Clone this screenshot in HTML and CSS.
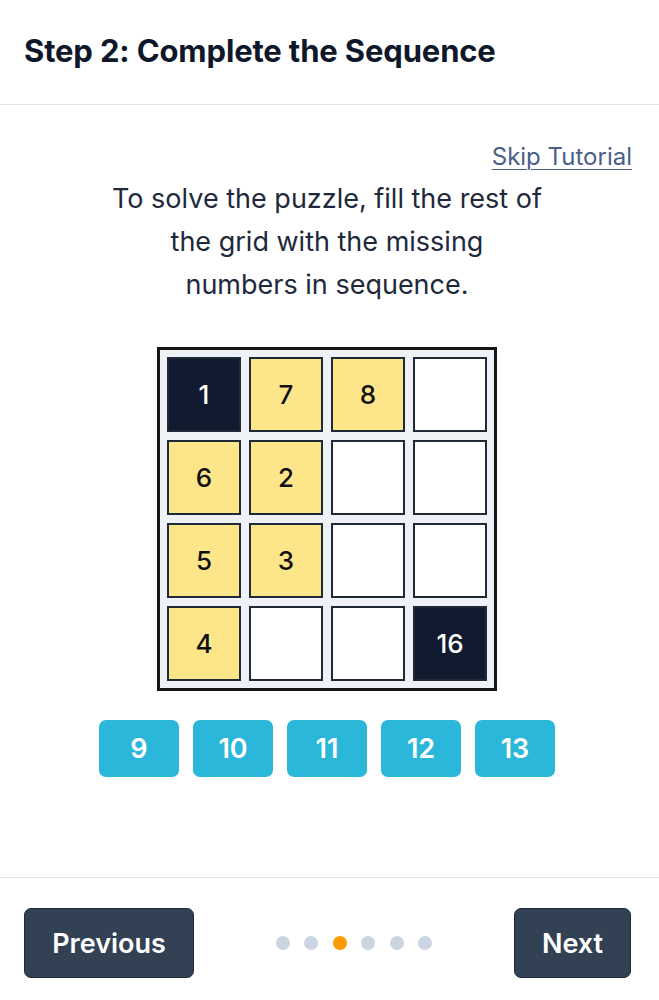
FILE: index.html
```html
<!DOCTYPE html>
<html lang="en">
<head>
<meta charset="utf-8">
<title>Step 2: Complete the Sequence</title>
<link rel="stylesheet" href="styles.css">
</head>
<body>
<div class="screen">
  <header class="header">
    <h1 class="title">Step 2: Complete the Sequence</h1>
  </header>
  <main class="content">
    <div class="skip-row"><a class="skip" href="#">Skip Tutorial</a></div>
    <p class="instructions">To solve the puzzle, fill the rest of<br>the grid with the missing<br>numbers in sequence.</p>
    <div class="board">
      <div class="cell cell-dark">1</div>
      <div class="cell cell-yellow">7</div>
      <div class="cell cell-yellow">8</div>
      <div class="cell"></div>
      <div class="cell cell-yellow">6</div>
      <div class="cell cell-yellow">2</div>
      <div class="cell"></div>
      <div class="cell"></div>
      <div class="cell cell-yellow">5</div>
      <div class="cell cell-yellow">3</div>
      <div class="cell"></div>
      <div class="cell"></div>
      <div class="cell cell-yellow">4</div>
      <div class="cell"></div>
      <div class="cell"></div>
      <div class="cell cell-dark">16</div>
    </div>
    <div class="choices">
      <button class="choice">9</button>
      <button class="choice">10</button>
      <button class="choice">11</button>
      <button class="choice">12</button>
      <button class="choice">13</button>
    </div>
  </main>
  <footer class="footer">
    <button class="nav-btn nav-prev">Previous</button>
    <div class="dots">
      <span class="dot"></span>
      <span class="dot"></span>
      <span class="dot dot-active"></span>
      <span class="dot"></span>
      <span class="dot"></span>
      <span class="dot"></span>
    </div>
    <button class="nav-btn nav-next">Next</button>
  </footer>
</div>
</body>
</html>
```

FILE: styles.css
```css
* { box-sizing: border-box; }

html, body {
  margin: 0;
  padding: 0;
  background: #ffffff;
  font-family: Inter, "Noto Sans", "Liberation Sans", sans-serif;
}

.screen {
  height: 1000px;
  display: flex;
  flex-direction: column;
}

.header {
  height: 105px;
  border-bottom: 1px solid #e2e4ea;
  padding: 0 27px 0 24px;
  display: flex;
  align-items: center;
}

.title {
  margin: 0;
  margin-top: -3px;
  font-size: 31px;
  font-weight: 700;
  color: #0f172a;
  letter-spacing: -0.15px;
}

.content {
  flex: 1;
  padding: 37px 28px 0 23px;
  display: flex;
  flex-direction: column;
  align-items: center;
}

.skip-row {
  align-self: stretch;
  display: flex;
  justify-content: flex-end;
  line-height: 30px;
  margin-right: -1px;
}

.skip {
  font-size: 24px;
  color: #4a6088;
  text-decoration: underline;
  text-decoration-thickness: 1px;
  text-underline-offset: 4px;
}

.instructions {
  margin: 5px 0 0;
  font-size: 27px;
  line-height: 43px;
  color: #1e293b;
  text-align: center;
}

.board {
  margin-top: 41px;
  border: 3px solid #161616;
  background: #eef2f7;
  padding: 7px;
  display: grid;
  grid-template-columns: repeat(4, 74px);
  grid-auto-rows: 75px;
  gap: 8px;
}

.cell {
  border: 2px solid #1f2937;
  background: #ffffff;
  display: flex;
  align-items: center;
  justify-content: center;
  font-size: 26px;
  font-weight: 500;
  color: #111111;
}

.cell-yellow { background: #fde68a; }

.cell-dark {
  background: #111a2e;
  color: #ffffff;
}

.choices {
  margin-top: 29px;
  display: flex;
  gap: 14px;
}

.choice {
  width: 80px;
  height: 57px;
  border: none;
  border-radius: 7px;
  background: #2ab7da;
  color: #ffffff;
  font-family: inherit;
  font-size: 27px;
  font-weight: 600;
  padding: 0;
}

.footer {
  border-top: 1px solid #e2e4ea;
  padding: 30px 28px 22px 24px;
  display: flex;
  align-items: center;
  justify-content: space-between;
}

.nav-btn {
  height: 70px;
  border: 1px solid #1e293b;
  border-radius: 7px;
  background: #334155;
  color: #ffffff;
  font-family: inherit;
  font-size: 27px;
  font-weight: 600;
  padding: 0;
}

.nav-prev { width: 170px; }
.nav-next { width: 117px; }

.dots {
  display: flex;
  gap: 14.5px;
}

.dot {
  width: 14px;
  height: 14px;
  border-radius: 50%;
  background: #cbd5e1;
}

.dot-active { background: #ff9900; }
```
